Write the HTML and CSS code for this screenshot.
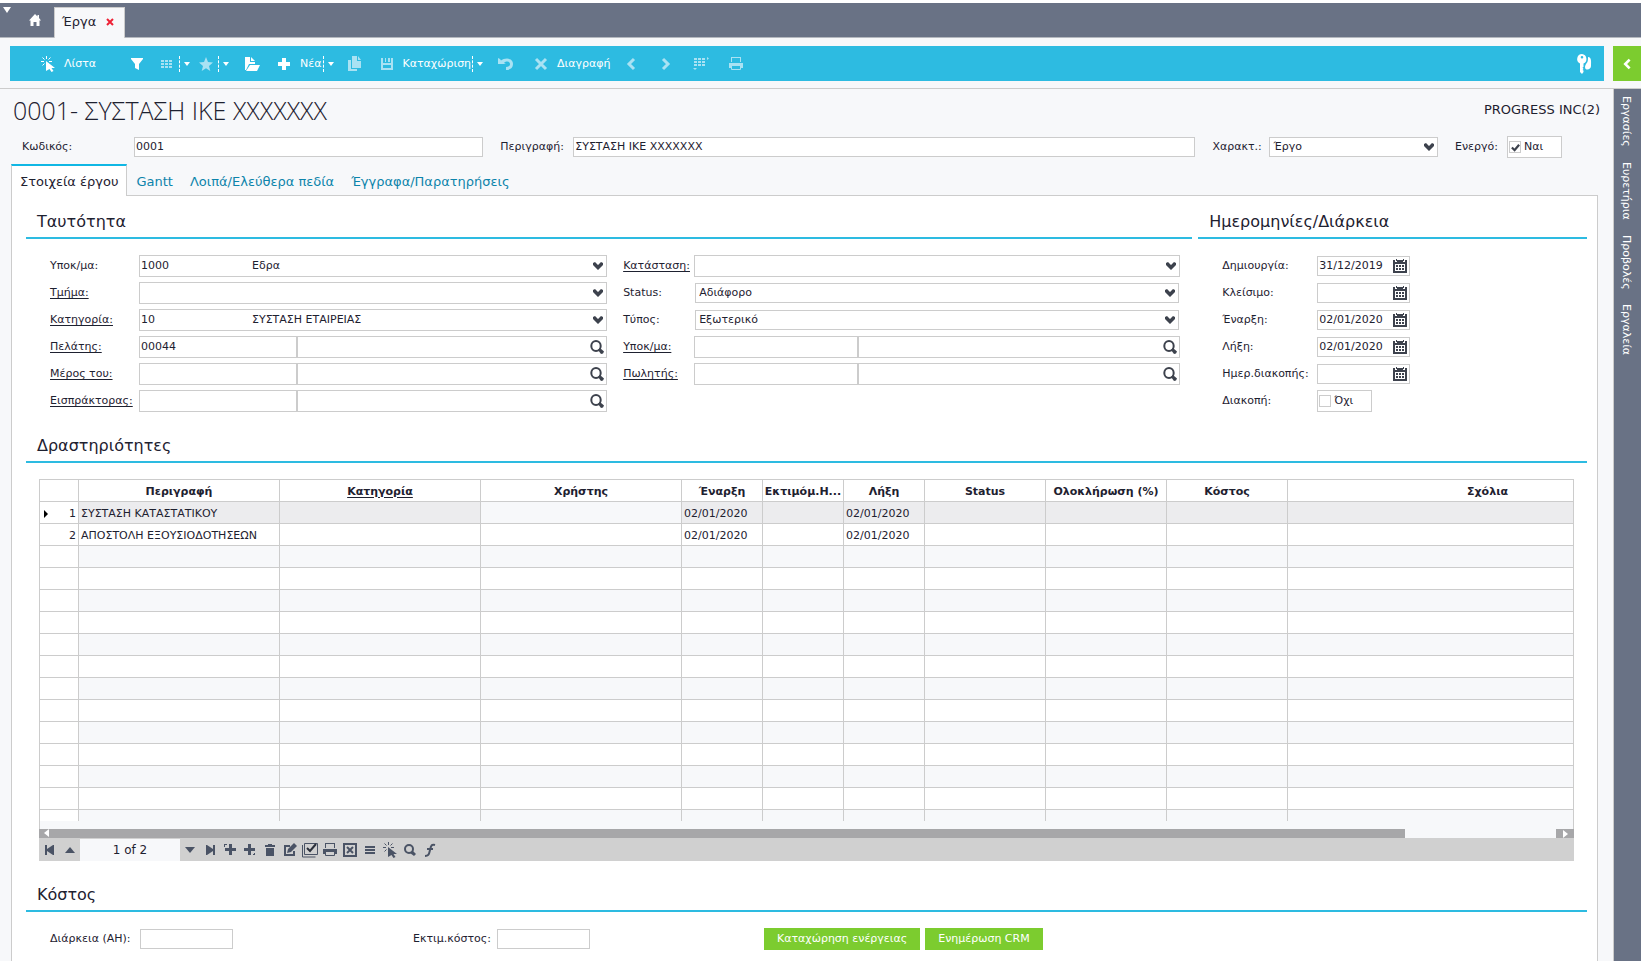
FILE: index.html
```html
<!DOCTYPE html>
<html lang="el">
<head>
    <meta charset="UTF-8">
    <meta name="viewport" content="width=device-width, initial-scale=1.0">
    <title>Έργα</title>
    <link rel="stylesheet" href="styles.css">
</head>
<body>
    <svg class="sprite" aria-hidden="true">
        <symbol id="i-caret" viewBox="0 0 8 16"><path d="M1 6h6L4 10z"/></symbol>
        <symbol id="i-burst" viewBox="0 0 16 16">
            <path d="M6 5l9 7h-3.500l2 3-2 1-2-3L6 15z"/>
            <path d="M6.500 0v3M1 5.500h3M2.500 1.500l2 2M10.500 1.500l-2 2M9 5.500h3M2.500 9.500l2-2" fill="none" stroke="currentColor"/>
        </symbol>
        <symbol id="i-dots" viewBox="0 0 16 16"><path d="M2 4h3v2H2zM6 4h3v2H6zM10 4h3v2h-3zM2 7h3v2H2zM6 7h3v2H6zM10 7h3v2h-3zM2 10h3v2H2zM6 10h3v2H6zM10 10h3v2h-3z"/></symbol>
        <symbol id="i-plus" viewBox="0 0 16 16"><path d="M6 2h4v4h4v4h-4v4H6v-4H2V6h4z"/></symbol>
        <symbol id="i-print" viewBox="0 0 16 16">
            <path d="M3 1h10v5h-1V2H4v4H3zM1 7h14v5h-2v-2H3v2H1z"/>
            <path d="M3.500 9.500h9v4h-9z" fill="none" stroke="currentColor"/>
        </symbol>
        <symbol id="i-chevron" viewBox="0 0 12 12"><path d="M1 3l2-1 3 3 3-3 2 1v2L6 10 1 5z"/></symbol>
        <symbol id="i-search" viewBox="0 0 16 16">
            <ellipse cx="7" cy="7" rx="4.700" ry="5" fill="none" stroke="currentColor" stroke-width="2"/>
            <path d="M9 11l2-2 4 3.500-1 2-2 .5z"/>
        </symbol>
        <symbol id="i-calendar" viewBox="0 0 14 14">
            <path d="M0 1h2v2h2V1h6v2h2V1h2v13H0zM2 5v7h10V5z" fill-rule="evenodd"/>
            <path d="M3 0h1v2H3zM10 0h1v2h-1zM3 6h2v2H3zM6 6h2v2H6zM9 6h2v2H9zM3 9h2v2H3zM6 9h2v2H6zM9 9h2v2H9z"/>
        </symbol>
    </svg>

    <header class="topbar">
        <button class="menu-arrow" aria-label="Μενού"><svg viewBox="0 0 8 6"><path d="M0 0h8L4 6z"/></svg></button>
        <button class="home" aria-label="Αρχική"><svg viewBox="0 0 12 12"><path d="M6 0l2.500 2.500V1H10v3l2 2.500h-1.500V12h-3V8h-3v4h-3V6.500H0z"/></svg></button>
        <div class="open-tab">
            <a href="#">Έργα</a>
            <button class="close" aria-label="Κλείσιμο"><svg viewBox="0 0 8 8"><path d="M1 1l6 6M7 1L1 7"/></svg></button>
        </div>
    </header>

    <div class="toolbar-row">
        <nav class="toolbar">
            <button class="tool list"><svg viewBox="0 0 16 16"><use href="#i-burst"/></svg>Λίστα</button>
            <button class="tool" aria-label="Φίλτρο"><svg viewBox="0 0 16 16"><path d="M2 2h12v1L10 8v6l-4-2V8L2 3z"/></svg></button>
            <div class="split">
                <button class="tool dim" aria-label="Πλέγμα"><svg viewBox="0 0 16 16"><use href="#i-dots"/></svg></button>
                <button class="drop" aria-label="Επιλογές"><svg viewBox="0 0 8 16"><use href="#i-caret"/></svg></button>
            </div>
            <div class="split star">
                <button class="tool dim" aria-label="Αγαπημένα"><svg viewBox="0 0 16 16"><path d="M8 1l2 5 5 .5-4 3.500 1.300 5L8 12.300 3.700 15 5 10 1 6.500 6 6z"/></svg></button>
                <button class="drop" aria-label="Επιλογές"><svg viewBox="0 0 8 16"><use href="#i-caret"/></svg></button>
            </div>
            <button class="tool" aria-label="Άνοιγμα"><svg viewBox="0 0 16 16"><path d="M1 1h5v5h5v2H5l-3 6H1zM7 1l4 4H7zM6 9h10l-3 6H2z"/></svg></button>
            <div class="split text">
                <button class="tool"><svg viewBox="0 0 16 16"><use href="#i-plus"/></svg>Νέα</button>
                <button class="drop" aria-label="Επιλογές"><svg viewBox="0 0 8 16"><use href="#i-caret"/></svg></button>
            </div>
            <button class="tool dim" aria-label="Αντιγραφή"><svg viewBox="0 0 16 16"><path d="M5 0h5v5h4v7H5zM11 0l3 4h-3zM1 4h3v9h6v2H1z"/></svg></button>
            <div class="split text">
                <button class="tool"><svg class="dim" viewBox="0 0 16 16"><path d="M2 2h2v5h8V2h2v12H2zM4 9v3h8V9zM6 2h1v4H6zM9 2h2v4H9z" fill-rule="evenodd"/></svg>Καταχώριση</button>
                <button class="drop" aria-label="Επιλογές"><svg viewBox="0 0 8 16"><use href="#i-caret"/></svg></button>
            </div>
            <div class="group">
                <button class="tool dim" aria-label="Αναίρεση"><svg viewBox="0 0 16 16"><path d="M0 2l2 1 1 1.500C6 2 15 1 15 8c0 4-3 6-7 6v-3c2 0 4-1 4-3 0-3-4-3-6-1l2 1H0z"/></svg></button>
                <button class="tool delete"><svg class="dim" viewBox="0 0 16 16"><path d="M3 3l10 10M13 3L3 13" stroke="currentColor" stroke-width="3"/></svg>Διαγραφή</button>
                <button class="tool dim" aria-label="Προηγούμενο"><svg viewBox="0 0 16 16"><path d="M11 3L6 8l5 5" fill="none" stroke="currentColor" stroke-width="3"/></svg></button>
                <button class="tool dim" aria-label="Επόμενο"><svg viewBox="0 0 16 16"><path d="M5 3l5 5-5 5" fill="none" stroke="currentColor" stroke-width="3"/></svg></button>
                <button class="tool dim" aria-label="Στήλες"><svg viewBox="0 0 16 16"><use href="#i-dots" x="-1" y="-2"/><path d="M14 1l2 1.500L14 4zM0 12h4l-2 2z"/></svg></button>
                <button class="tool dim" aria-label="Εκτύπωση"><svg viewBox="0 0 16 16"><use href="#i-print"/></svg></button>
            </div>
            <button class="keys" aria-label="Δικαιώματα"><svg viewBox="0 0 16 22"><path d="M6 1a5 5 0 0 0-2 9.500V19l2 2 1.500-2v-1.500L6.500 17l1-1-1-1.500 1-.5v-3.500A5 5 0 0 0 6 1zm0 2a1.300 1.300 0 1 1 0 2.600A1.300 1.300 0 0 1 6 3zM12 4c4 0 3 6 3 9 0 4-6 5-6 1 0-1 .5-2 1-3 2-2 2-4 2-7z" fill-rule="evenodd"/></svg></button>
        </nav>
        <button class="expand" aria-label="Άνοιγμα πλαϊνής στήλης"><svg viewBox="0 0 16 16"><path d="M11 3L6 8l5 5" fill="none" stroke="currentColor" stroke-width="3"/></svg></button>
    </div>

    <div class="page">
        <main class="content">
            <div class="title-row">
                <h1>0001- ΣΥΣΤΑΣΗ ΙΚΕ ΧΧΧΧΧΧΧ</h1>
                <span class="company">PROGRESS INC(2)</span>
            </div>

            <div class="head-fields">
                <label class="l-code" for="code">Κωδικός:</label>
                <input class="box f-code" id="code" value="0001">
                <label class="l-descr" for="descr">Περιγραφή:</label>
                <input class="box f-descr" id="descr" value="ΣΥΣΤΑΣΗ ΙΚΕ ΧΧΧΧΧΧΧ">
                <label class="l-kind" for="kind">Χαρακτ.:</label>
                <select class="box f-kind" id="kind"><option>Έργο</option></select>
                <label class="l-active" for="active">Ενεργό:</label>
                <span class="check"><input type="checkbox" id="active" checked><label for="active">Ναι</label></span>
            </div>

            <nav class="tabs">
                <a class="active" href="#">Στοιχεία έργου</a>
                <a href="#">Gantt</a>
                <a href="#">Λοιπά/Ελεύθερα πεδία</a>
                <a href="#">Έγγραφα/Παρατηρήσεις</a>
            </nav>

            <div class="panel">
                <div class="sections">
                    <section>
                        <h2>Ταυτότητα</h2>
                        <div class="identity">
                            <div class="column left">
                                <div class="field">
                                    <label for="branch">Υποκ/μα:</label>
                                    <div class="combo"><input class="code" id="branch" value="1000"><input class="name" aria-label="Όνομα υποκ/τος" value="Εδρα"><button aria-label="Επιλογή"><svg viewBox="0 0 12 12"><use href="#i-chevron"/></svg></button></div>
                                </div>
                                <div class="field">
                                    <label class="link" for="dept">Τμήμα:</label>
                                    <div class="combo"><input class="code" id="dept"><input class="name" aria-label="Όνομα τμήματος"><button aria-label="Επιλογή"><svg viewBox="0 0 12 12"><use href="#i-chevron"/></svg></button></div>
                                </div>
                                <div class="field">
                                    <label class="link" for="cat">Κατηγορία:</label>
                                    <div class="combo"><input class="code" id="cat" value="10"><input class="name" aria-label="Όνομα κατηγορίας" value="ΣΥΣΤΑΣΗ ΕΤΑΙΡΕΙΑΣ"><button aria-label="Επιλογή"><svg viewBox="0 0 12 12"><use href="#i-chevron"/></svg></button></div>
                                </div>
                                <div class="field">
                                    <label class="link" for="customer">Πελάτης:</label>
                                    <div class="combo lookup"><input class="code" id="customer" value="00044"><input class="name" aria-label="Όνομα πελάτη"><button aria-label="Αναζήτηση"><svg viewBox="0 0 16 16"><use href="#i-search"/></svg></button></div>
                                </div>
                                <div class="field">
                                    <label class="link" for="parent">Μέρος του:</label>
                                    <div class="combo lookup"><input class="code" id="parent"><input class="name" aria-label="Όνομα έργου"><button aria-label="Αναζήτηση"><svg viewBox="0 0 16 16"><use href="#i-search"/></svg></button></div>
                                </div>
                                <div class="field">
                                    <label class="link" for="collector">Εισπράκτορας:</label>
                                    <div class="combo lookup"><input class="code" id="collector"><input class="name" aria-label="Όνομα εισπράκτορα"><button aria-label="Αναζήτηση"><svg viewBox="0 0 16 16"><use href="#i-search"/></svg></button></div>
                                </div>
                            </div>
                            <div class="column right">
                                <div class="field">
                                    <label class="link" for="state">Κατάσταση:</label>
                                    <div class="combo"><input class="code" id="state"><input class="name" aria-label="Όνομα κατάστασης"><button aria-label="Επιλογή"><svg viewBox="0 0 12 12"><use href="#i-chevron"/></svg></button></div>
                                </div>
                                <div class="field">
                                    <label for="status">Status:</label>
                                    <select class="box" id="status"><option>Αδιάφορο</option></select>
                                </div>
                                <div class="field">
                                    <label for="type">Τύπος:</label>
                                    <select class="box" id="type"><option>Εξωτερικό</option></select>
                                </div>
                                <div class="field">
                                    <label class="link" for="branch2">Υποκ/μα:</label>
                                    <div class="combo lookup"><input class="code" id="branch2"><input class="name" aria-label="Όνομα υποκ/τος πελάτη"><button aria-label="Αναζήτηση"><svg viewBox="0 0 16 16"><use href="#i-search"/></svg></button></div>
                                </div>
                                <div class="field">
                                    <label class="link" for="seller">Πωλητής:</label>
                                    <div class="combo lookup"><input class="code" id="seller"><input class="name" aria-label="Όνομα πωλητή"><button aria-label="Αναζήτηση"><svg viewBox="0 0 16 16"><use href="#i-search"/></svg></button></div>
                                </div>
                            </div>
                        </div>
                    </section>

                    <section>
                        <h2>Ημερομηνίες/Διάρκεια</h2>
                        <div class="column dates">
                            <div class="field">
                                <label for="created">Δημιουργία:</label>
                                <div class="date"><input id="created" value="31/12/2019"><button aria-label="Ημερολόγιο"><svg viewBox="0 0 14 14"><use href="#i-calendar"/></svg></button></div>
                            </div>
                            <div class="field">
                                <label for="closed">Κλείσιμο:</label>
                                <div class="date"><input id="closed"><button aria-label="Ημερολόγιο"><svg viewBox="0 0 14 14"><use href="#i-calendar"/></svg></button></div>
                            </div>
                            <div class="field">
                                <label for="start">Έναρξη:</label>
                                <div class="date"><input id="start" value="02/01/2020"><button aria-label="Ημερολόγιο"><svg viewBox="0 0 14 14"><use href="#i-calendar"/></svg></button></div>
                            </div>
                            <div class="field">
                                <label for="end">Λήξη:</label>
                                <div class="date"><input id="end" value="02/01/2020"><button aria-label="Ημερολόγιο"><svg viewBox="0 0 14 14"><use href="#i-calendar"/></svg></button></div>
                            </div>
                            <div class="field">
                                <label for="stopped">Ημερ.διακοπής:</label>
                                <div class="date"><input id="stopped"><button aria-label="Ημερολόγιο"><svg viewBox="0 0 14 14"><use href="#i-calendar"/></svg></button></div>
                            </div>
                            <div class="field">
                                <label for="stop">Διακοπή:</label>
                                <span class="check"><input type="checkbox" id="stop"><label for="stop">Όχι</label></span>
                            </div>
                        </div>
                    </section>
                </div>

                <section class="activities">
                    <h2>Δραστηριότητες</h2>
                    <div class="grid">
                        <div class="grid-view">
                            <table>
                                <colgroup>
                                    <col class="c-num"><col class="c-wide"><col class="c-wide"><col class="c-wide">
                                    <col class="c-date"><col class="c-date"><col class="c-date">
                                    <col class="c-mid"><col class="c-mid"><col class="c-mid"><col class="c-notes">
                                </colgroup>
                                <thead>
                                    <tr><th></th><th>Περιγραφή</th><th class="link">Κατηγορία</th><th>Χρήστης</th><th>Έναρξη</th><th>Εκτιμόμ.Η...</th><th>Λήξη</th><th>Status</th><th>Ολοκλήρωση (%)</th><th>Κόστος</th><th>Σχόλια</th></tr>
                                </thead>
                                <tbody>
                                    <tr class="selected"><td><span class="marker"></span>1</td><td>ΣΥΣΤΑΣΗ ΚΑΤΑΣΤΑΤΙΚΟΥ</td><td></td><td class="focus"></td><td>02/01/2020</td><td></td><td>02/01/2020</td><td></td><td></td><td></td><td></td></tr>
                                    <tr><td>2</td><td>ΑΠΟΣΤΟΛΗ ΕΞΟΥΣΙΟΔΟΤΗΣΕΩΝ</td><td></td><td></td><td>02/01/2020</td><td></td><td>02/01/2020</td><td></td><td></td><td></td><td></td></tr>
                                    <tr><td></td><td></td><td></td><td></td><td></td><td></td><td></td><td></td><td></td><td></td><td></td></tr>
                                    <tr><td></td><td></td><td></td><td></td><td></td><td></td><td></td><td></td><td></td><td></td><td></td></tr>
                                    <tr><td></td><td></td><td></td><td></td><td></td><td></td><td></td><td></td><td></td><td></td><td></td></tr>
                                    <tr><td></td><td></td><td></td><td></td><td></td><td></td><td></td><td></td><td></td><td></td><td></td></tr>
                                    <tr><td></td><td></td><td></td><td></td><td></td><td></td><td></td><td></td><td></td><td></td><td></td></tr>
                                    <tr><td></td><td></td><td></td><td></td><td></td><td></td><td></td><td></td><td></td><td></td><td></td></tr>
                                    <tr><td></td><td></td><td></td><td></td><td></td><td></td><td></td><td></td><td></td><td></td><td></td></tr>
                                    <tr><td></td><td></td><td></td><td></td><td></td><td></td><td></td><td></td><td></td><td></td><td></td></tr>
                                    <tr><td></td><td></td><td></td><td></td><td></td><td></td><td></td><td></td><td></td><td></td><td></td></tr>
                                    <tr><td></td><td></td><td></td><td></td><td></td><td></td><td></td><td></td><td></td><td></td><td></td></tr>
                                    <tr><td></td><td></td><td></td><td></td><td></td><td></td><td></td><td></td><td></td><td></td><td></td></tr>
                                    <tr><td></td><td></td><td></td><td></td><td></td><td></td><td></td><td></td><td></td><td></td><td></td></tr>
                                    <tr class="last"><td></td><td></td><td></td><td></td><td></td><td></td><td></td><td></td><td></td><td></td><td></td></tr>
                                </tbody>
                            </table>
                        </div>
                        <div class="scrollbar">
                            <div class="thumb"><svg viewBox="0 0 8 8"><path d="M6 0v8L1 4z"/></svg></div>
                            <button aria-label="Κύλιση δεξιά"><svg viewBox="0 0 8 8"><path d="M2 0v8l5-4z"/></svg></button>
                        </div>
                        <div class="grid-tools">
                            <button aria-label="Πρώτη"><svg viewBox="0 0 16 16"><path d="M3 3h2v4l6-4h1v10h-1L5 9v4H3z"/></svg></button>
                            <button aria-label="Προηγούμενη"><svg viewBox="0 0 16 16"><path d="M3 11l5-6 5 6z"/></svg></button>
                            <span class="position">1 of 2</span>
                            <button aria-label="Επόμενη"><svg viewBox="0 0 16 16"><path d="M3 5h10l-5 6z"/></svg></button>
                            <button aria-label="Τελευταία"><svg viewBox="0 0 16 16"><path d="M13 3h-2v4L5 3H4v10h1l6-4v4h2z"/></svg></button>
                            <button aria-label="Εισαγωγή"><svg viewBox="0 0 16 16"><path d="M7 2h3v4h4v3h-4v4H7V9H3V6h4zM2 2h3v1H3v2H2z"/></svg></button>
                            <button aria-label="Προσθήκη"><svg viewBox="0 0 16 16"><path d="M6 2h3v4h4v3H9v4H6V9H2V6h4zM11 12h1v-1h1v2h-2z"/></svg></button>
                            <button aria-label="Διαγραφή γραμμής"><svg viewBox="0 0 16 16"><path d="M3 3h3V2h4v1h3v2H3zM4 6h8v8H4z"/></svg></button>
                            <button aria-label="Επεξεργασία"><svg viewBox="0 0 16 16"><path d="M8 4H3v9h9V9" fill="none" stroke="currentColor" stroke-width="2"/><path d="M5 11l1-4 6-6 3 3-6 6z"/></svg></button>
                            <button aria-label="Επιλογή όλων"><svg viewBox="0 0 16 16"><path d="M2.500 1.500h13v11h-13zM.5 3v12h13" fill="none" stroke="currentColor"/><path d="M5 6l3 3 6-7" fill="none" stroke="#2b303b" stroke-width="2"/></svg></button>
                            <button aria-label="Εκτύπωση πίνακα"><svg viewBox="0 0 16 16"><use href="#i-print"/></svg></button>
                            <button aria-label="Excel"><svg viewBox="0 0 16 16"><path d="M2 2h12v12H2z" fill="none" stroke="currentColor" stroke-width="2"/><path d="M5 5l6 6M11 5l-6 6" stroke="currentColor" stroke-width="2"/></svg></button>
                            <button aria-label="Μενού πίνακα"><svg viewBox="0 0 16 16"><path d="M3 4h10v2H3zM3 7h10v2H3zM3 10h10v2H3z"/></svg></button>
                            <button aria-label="Ενέργειες"><svg viewBox="0 0 16 16"><use href="#i-burst"/></svg></button>
                            <button aria-label="Εύρεση"><svg viewBox="0 0 16 16"><ellipse cx="7" cy="7" rx="4" ry="4" fill="none" stroke="currentColor" stroke-width="2"/><path d="M8 11l3-2 3 3-2 2z"/></svg></button>
                            <button aria-label="Συνάρτηση"><svg viewBox="0 0 16 16"><path d="M13 3c-3-1-4 0-5 5s-2 6-5 6M5 7h6" fill="none" stroke="currentColor" stroke-width="2"/></svg></button>
                        </div>
                    </div>
                </section>

                <section class="cost">
                    <h2>Κόστος</h2>
                    <div class="cost-row">
                        <div class="field">
                            <label class="l-hours" for="hours">Διάρκεια (ΑΗ):</label>
                            <input class="box" id="hours">
                        </div>
                        <div class="field">
                            <label class="l-cost" for="estimate">Εκτιμ.κόστος:</label>
                            <input class="box" id="estimate">
                        </div>
                        <div class="actions">
                            <button>Καταχώρηση ενέργειας</button>
                            <button>Ενημέρωση CRM</button>
                        </div>
                    </div>
                </section>
            </div>
        </main>

        <nav class="sidebar">
            <a href="#">Εργασίες</a>
            <a href="#">Ευρετήρια</a>
            <a href="#">Προβολές</a>
            <a href="#">Εργαλεία</a>
        </nav>
    </div>
</body>
</html>
```
FILE: styles.css
```css
* {
    box-sizing: border-box;
}
body {
    display: flex;
    flex-direction: column;
    height: 100vh;
    margin: 0;
    overflow: hidden;
    background: #f7f8fa;
    color: #1e2130;
    font-family: Verdana, "DejaVu Sans", sans-serif;
    font-size: 11px;
    line-height: 16px;
}
button, input, select {
    font: inherit;
    color: inherit;
    margin: 0;
    padding: 0;
}
button {
    display: flex;
    align-items: center;
    border: none;
    background: none;
    cursor: pointer;
}
a {
    color: inherit;
    text-decoration: none;
}
svg {
    display: block;
    flex: none;
    fill: currentColor;
}
.sprite {
    position: absolute;
    width: 0;
    height: 0;
}

/* top bar */
.topbar {
    display: flex;
    flex: none;
    height: 38px;
    border-top: 3px solid #fff;
    border-bottom: 1px solid #b4b8bf;
    background: #697285;
    color: #fff;
}
.menu-arrow {
    align-self: flex-start;
    margin: 4px 0 0 3px;
}
.menu-arrow svg {
    width: 8px;
    height: 6px;
}
.home {
    margin: 0 13px 0 18px;
}
.home svg {
    width: 12px;
    height: 12px;
}
.open-tab {
    display: flex;
    align-items: center;
    gap: 10px;
    margin: 4px 0 -1px;
    padding: 0 10px 2px 7px;
    border: 1px solid #ccc;
    border-bottom: none;
    background: #f7f8fa;
    color: #1e2130;
    font-size: 13px;
}
.close svg {
    width: 8px;
    height: 8px;
    stroke: #ee2135;
    stroke-width: 2;
}

/* toolbar */
.toolbar-row {
    display: flex;
    flex: none;
    gap: 9px;
    height: 51px;
    padding: 8px 0 7px 10px;
    border-bottom: 1px solid #ccc;
}
.toolbar {
    display: flex;
    flex: 1;
    align-items: center;
    gap: 14px;
    padding: 0 12px 0 30px;
    background: #2dbbe1;
    color: #fff;
}
.tool {
    gap: 8px;
}
.tool svg {
    width: 16px;
    height: 16px;
}
.list {
    margin-right: 19px;
}
.dim {
    color: #a9e2f3;
}
.split {
    display: flex;
    gap: 4px;
}
.split.star {
    margin-left: -7px;
}
.split.text {
    gap: 1px;
    margin: 0 -2px 0 2px;
}
.group {
    display: flex;
    gap: 19px;
    margin-left: 2px;
}
.group .delete {
    margin-right: -7px;
}
.drop {
    padding-left: 3px;
    border-left: 1px dashed #fff;
}
.drop svg {
    width: 8px;
    height: 16px;
}
.keys {
    margin-left: auto;
}
.keys svg {
    width: 16px;
    height: 22px;
}
.expand {
    width: 28px;
    justify-content: center;
    background: #7ccc2f;
    color: #fff;
}
.expand svg {
    width: 14px;
    height: 14px;
}

/* page */
.page {
    display: flex;
    flex: 1;
    min-height: 0;
}
.content {
    display: flex;
    flex: 1;
    flex-direction: column;
    min-width: 0;
}
.sidebar {
    display: flex;
    flex-direction: column;
    align-items: center;
    gap: 15px;
    width: 28px;
    padding: 7px 3px 0 0;
    border-left: 1px solid #ccc;
    background: #697285;
    color: #fff;
}
.sidebar a {
    writing-mode: vertical-rl;
}
.title-row {
    display: flex;
    align-items: center;
    justify-content: space-between;
    height: 47px;
    padding: 0 13px 5px;
}
h1 {
    margin: 0;
    font-family: "Open Sans", "Noto Sans", sans-serif;
    font-size: 25px;
    font-weight: 300;
    line-height: 32px;
}
.company {
    font-size: 13px;
}
.box {
    width: 93px;
    height: 20px;
    padding: 0 1px 2px;
    border: 1px solid #ccc;
    border-radius: 0;
    background: #fff;
    outline: none;
}
select.box {
    padding: 0 3px;
    appearance: none;
    background: #fff url("data:image/svg+xml,%3Csvg xmlns='http://www.w3.org/2000/svg' viewBox='0 0 12 12'%3E%3Cpath fill='%233d424d' d='M1 3l2-1 3 3 3-3 2 1v2L6 10 1 5z'/%3E%3C/svg%3E") no-repeat right 2px center / 12px 12px;
}
.head-fields {
    display: flex;
    align-items: center;
    height: 22px;
    padding: 0 51px 0 22px;
}
.l-code {
    width: 112px;
}
.f-code {
    flex: 43;
    min-width: 0;
}
.l-descr {
    width: 90px;
    padding-left: 17px;
}
.f-descr {
    flex: 77;
    min-width: 0;
}
.l-kind {
    width: 74px;
    padding-left: 17px;
}
.f-kind {
    flex: 20;
    min-width: 0;
}
.l-active {
    width: 69px;
    padding-left: 17px;
}
.check {
    display: flex;
    align-items: center;
    gap: 3px;
    width: 55px;
    height: 22px;
    padding-left: 1px;
    border: 1px solid #ccc;
    background: #fff;
}
.check input {
    width: 12px;
    height: 12px;
    appearance: none;
    border: 1px solid #ccc;
    background: #fff;
}
.check input:checked {
    background: #fff url("data:image/svg+xml,%3Csvg xmlns='http://www.w3.org/2000/svg' viewBox='0 0 10 10'%3E%3Cpath fill='none' stroke='%233d424d' stroke-width='2.500' d='M1 5l3 3 5-6'/%3E%3C/svg%3E") no-repeat center / 9px 9px;
}

/* tabs */
.tabs {
    display: flex;
    gap: 1px;
    margin-top: 6px;
    padding-left: 11px;
    font-size: 13px;
}
.tabs a {
    height: 31px;
    padding: 10px 8px 0;
    color: #0d84ab;
}
.tabs .active {
    z-index: 1;
    height: 32px;
    margin-bottom: -1px;
    padding: 8px 8px 0;
    border: 1px solid #ccc;
    border-top: 2px solid #10b7e4;
    border-bottom: none;
    background: #fff;
    color: #1e2130;
}
.panel {
    flex: 1;
    margin: 0 15px 0 11px;
    padding: 0 10px 0 14px;
    border: 1px solid #ccc;
    border-bottom: none;
    background: #fff;
}
.sections {
    display: grid;
    grid-template-columns: 3fr 1fr;
    gap: 6px;
}
h2 {
    margin: 0 0 16px;
    padding: 11px 0 0 11px;
    border-bottom: 2px solid #2dbbe1;
    font-size: 16px;
    font-weight: 400;
    line-height: 30px;
}
.identity {
    display: grid;
    grid-template-columns: 1fr 1fr;
    gap: 16px;
    padding: 0 12px 0 24px;
}
.column {
    display: flex;
    flex-direction: column;
    gap: 5px;
}
.field {
    display: flex;
    align-items: center;
    height: 22px;
}
.left label {
    width: 89px;
}
.right label {
    width: 71px;
}
.link {
    text-decoration: underline;
    text-underline-offset: 2px;
}
.field select {
    flex: 1;
    margin: 0 1px;
}
.combo {
    display: flex;
    flex: 1;
    align-items: center;
    height: 22px;
    padding-right: 2px;
    border: 1px solid #ccc;
    background: #fff;
    color: #3d424d;
}
.combo input, .date input {
    min-width: 0;
    height: 18px;
    padding-bottom: 2px;
    border: none;
    outline: none;
    background: none;
    color: #1e2130;
}
.combo .code {
    flex: 0 0 110px;
    padding-left: 1px;
}
.combo .name {
    flex: 1;
    padding-left: 2px;
}
.lookup {
    padding-right: 1px;
}
.lookup .code {
    flex: 0 0 34%;
    height: 20px;
    border-right: 2px solid #ccc;
}
.combo svg {
    width: 12px;
    height: 12px;
}
.lookup svg {
    width: 16px;
    height: 16px;
}
.dates {
    padding-left: 24px;
}
.dates .field > label {
    width: 95px;
}
.date {
    display: flex;
    align-items: center;
    width: 93px;
    height: 20px;
    padding: 0 2px 0 1px;
    border: 1px solid #ccc;
    color: #3d424d;
}
.date input {
    flex: 1;
}
.date svg {
    width: 14px;
    height: 14px;
}

/* activities grid */
.activities, .cost {
    margin-top: 8px;
}
.grid {
    margin: 0 13px;
}
.grid-view {
    overflow: hidden;
    padding-bottom: 8px;
    border: 1px solid #ccc;
    border-bottom: none;
    background: #f7f8fa;
}
table {
    width: 1648px;
    table-layout: fixed;
    border-collapse: separate;
    border-spacing: 0;
}
.c-num {
    width: 39px;
}
.c-wide {
    width: 201px;
}
.c-date {
    width: 81px;
}
.c-mid {
    width: 121px;
}
th, td {
    height: 22px;
    padding: 2px 2px 0;
    border: 1px solid #ccc;
    border-width: 0 1px 1px 0;
    white-space: nowrap;
    line-height: 16px;
}
th {
    padding: 2px 0 0;
    background: #fff;
}
tr:nth-child(even) td, tr td:first-child {
    background: #fff;
}
td:first-child {
    text-align: right;
}
.selected td {
    background: #ececee;
}
.selected .focus {
    background: #f7f8fa;
}
.last td {
    height: 11px;
    border-bottom: none;
}
.marker {
    float: left;
    margin: 4px 0 0 2px;
    border: 4px solid transparent;
    border-left-color: #000;
    border-right: none;
}
.scrollbar {
    display: flex;
    justify-content: space-between;
    height: 9px;
    background: #f7f8fa;
    color: #fff;
}
.scrollbar .thumb {
    width: 89%;
    padding-left: 4px;
    background: #a7a7a9;
}
.scrollbar button {
    width: 18px;
    justify-content: center;
    background: #a7a7a9;
}
.scrollbar svg {
    width: 8px;
    height: 8px;
}
.grid-tools {
    display: flex;
    align-items: center;
    gap: 4px;
    height: 23px;
    padding: 1px 3px 0;
    background: #d0d0d0;
    color: #4a5365;
}
.grid-tools svg {
    width: 16px;
    height: 16px;
}
.position {
    align-self: flex-end;
    width: 100px;
    margin: 0 -2px;
    background: #f7f8fa;
    color: #1e2130;
    font-size: 12px;
    line-height: 22px;
    text-align: center;
}

/* cost */
.cost-row {
    display: grid;
    grid-template-columns: 363px 351px auto;
    padding-left: 24px;
}
.l-hours {
    width: 90px;
}
.l-cost {
    width: 84px;
}
.actions {
    display: flex;
    gap: 5px;
}
.actions button {
    height: 22px;
    padding: 0 13px;
    background: #7ccc2f;
    color: #fff;
}
```
